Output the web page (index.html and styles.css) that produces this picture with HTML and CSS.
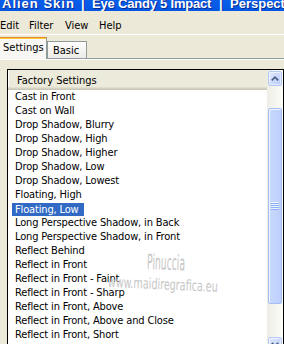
FILE: index.html
```html
<!DOCTYPE html>
<html>
<head>
<meta charset="utf-8">
<title>Eye Candy 5 Impact - Perspective Shadow</title>
<link rel="stylesheet" href="styles.css">
</head>
<body>
<div class="window">
  <div class="titlebar">
    <div class="title-text"><span class="t1">Alien Skin</span><span class="tsep">|</span><span class="t2">Eye Candy 5 Impact</span><span class="tsep">|</span><span class="t3">Perspective Shadow</span></div>
  </div>
  <div class="menubar">
    <span class="m m-edit">Edit</span><span class="m m-filter">Filter</span><span class="m m-view">View</span><span class="m">Help</span>
  </div>
  <div class="tabstrip">
    <div class="tab tab-settings">Settings</div>
    <div class="tab tab-basic">Basic</div>
  </div>
  <div class="panel">
    <div class="listbox">
      <div class="listmain">
        <div class="header">Factory Settings</div>
        <ul class="items">
          <li><span>Cast in Front</span></li>
          <li><span>Cast on Wall</span></li>
          <li><span>Drop Shadow, Blurry</span></li>
          <li><span>Drop Shadow, High</span></li>
          <li><span>Drop Shadow, Higher</span></li>
          <li><span>Drop Shadow, Low</span></li>
          <li><span>Drop Shadow, Lowest</span></li>
          <li><span>Floating, High</span></li>
          <li class="sel"><span>Floating, Low</span></li>
          <li><span>Long Perspective Shadow, in Back</span></li>
          <li><span>Long Perspective Shadow, in Front</span></li>
          <li><span>Reflect Behind</span></li>
          <li><span>Reflect in Front</span></li>
          <li><span>Reflect in Front - Faint</span></li>
          <li><span>Reflect in Front - Sharp</span></li>
          <li><span>Reflect in Front, Above</span></li>
          <li><span>Reflect in Front, Above and Close</span></li>
          <li><span>Reflect in Front, Short</span></li>
          <li><span>Reflect in Front, Small</span></li>
        </ul>
      </div>
      <div class="scrollbar">
        <div class="sb-btn"><svg width="8" height="5" viewBox="0 0 8 5"><polyline points="0.8,4.3 4,1.2 7.2,4.3" fill="none" stroke="#4d6185" stroke-width="1.8"/></svg></div>
        <div class="sb-gap1"></div>
        <div class="sb-thumb"><span class="grip"></span></div>
        <div class="sb-gap2"></div>
        <div class="sb-btn"><svg width="8" height="5" viewBox="0 0 8 5"><polyline points="0.8,0.8 4,3.9 7.2,0.8" fill="none" stroke="#4d6185" stroke-width="1.8"/></svg></div>
      </div>
    </div>
    <div class="wm wm-name">Pinuccia</div>
    <div class="wm wm-url">www.maidiregrafica.eu</div>
  </div>
</div>
</body>
</html>
```

FILE: styles.css
```css
* { box-sizing: border-box; margin: 0; padding: 0; }
html, body { width: 284px; height: 344px; overflow: hidden; }
body {
  background: #ece9d8;
  font-family: "DejaVu Sans Condensed", "DejaVu Sans", sans-serif;
  font-stretch: condensed;
  font-size: 11px;
  color: #000;
}
.window { display: flex; flex-direction: column; height: 344px; }

.titlebar {
  flex: none;
  height: 11px;
  overflow: hidden;
  background: linear-gradient(#0b5ee9, #0457e4);
  color: #fff;
}
.title-text {
  display: flex;
  margin-top: -4px;
  line-height: 15px;
  font-family: "Liberation Sans", Arial, sans-serif;
  font-stretch: normal;
  font-weight: bold;
  font-size: 13px;
  white-space: nowrap;
  text-shadow: 1px 1px #0c2a8c;
}
.t1 { flex: none; width: 81px; padding-left: 2px; letter-spacing: 1px; }
.tsep { flex: none; width: 11px; }
.t2 { flex: none; width: 127px; letter-spacing: -0.2px; }
.t3 { flex: none; }

.menubar {
  flex: none;
  display: flex;
  height: 24px;
  padding-top: 8px;
  line-height: 13px;
  border-bottom: 1px solid #fff;
}
.m { flex: none; }
.m-edit { width: 29px; }
.m-filter { width: 36px; }
.m-view { width: 34px; }

.tabstrip {
  flex: none;
  display: flex;
  align-items: flex-end;
  height: 23px;
}
.tab { flex: none; line-height: 13px; white-space: nowrap; }
.tab-settings {
  position: relative;
  z-index: 1;
  width: 47px;
  height: 22px;
  margin-bottom: -1px;
  padding: 3px 0 0 3px;
  border-top: 1px solid #e68b2c;
  border-right: 1px solid #919b9c;
  background: #f8f7f3;
  box-shadow: inset 0 1px #ffc73c;
}
.tab-basic {
  width: 40px;
  height: 17px;
  padding: 2px 0 0 5px;
  border: 1px solid #919b9c;
  border-bottom: 0;
  background: linear-gradient(#fefefe, #ecebe6);
}

.panel {
  position: relative;
  flex: 1;
  min-height: 0;
  overflow: hidden;
  border-top: 1px solid #919b9c;
  box-shadow: inset 0 1px #fff;
  padding: 10px 0 0 7px;
}
.listbox {
  display: flex;
  width: 277px;
  height: 300px;
  border: 1px solid #000;
  background: #fff;
}
.listmain { flex: none; width: 259px; }
.header {
  height: 20px;
  padding: 4px 0 0 9px;
  line-height: 13px;
  background: #ebeadb;
  box-shadow: inset 0 -1px #cbc7b8, inset 0 -2px #d6d2c2, inset 0 -3px #e2decd, inset 1px 0 #fff;
}
.items { list-style: none; }
.items li {
  height: 14px;
  line-height: 14px;
  padding-left: 4px;
  white-space: nowrap;
}
.items li span {
  display: inline-block;
  padding: 0 5px 0 3px;
  letter-spacing: -0.15px;
}
.items li.sel span {
  background: #316ac5;
  color: #fff;
  height: 13px;
  line-height: 13px;
  margin-top: 1px;
  vertical-align: top;
}

.scrollbar {
  flex: none;
  width: 16px;
  display: flex;
  flex-direction: column;
  padding: 1px 1px 0 1px;
  background: linear-gradient(to right, #eeede5, #fdfdfa);
}
.sb-btn {
  flex: none;
  height: 15px;
  display: flex;
  align-items: center;
  justify-content: center;
  border: 1px solid #b4c8f6;
  border-radius: 2px;
  background: linear-gradient(to bottom right, #e1eafe, #b8cbf8);
  box-shadow: inset 0 0 0 1px rgba(255, 255, 255, 0.5);
}
.sb-gap1 { flex: none; height: 22px; }
.sb-gap2 { flex: none; height: 33px; }
.sb-thumb {
  flex: none;
  height: 196px;
  display: flex;
  align-items: center;
  justify-content: center;
  border: 1px solid #a5bdf5;
  border-radius: 2px;
  background: linear-gradient(to right, #cad9fd, #bcd0fb);
  box-shadow: inset 1px 1px #f0f4ff;
}
.grip {
  width: 8px;
  height: 8px;
  background: repeating-linear-gradient(to bottom, #eef4fe 0 1px, #8cb0f8 1px 2px);
}

.wm {
  position: absolute;
  color: #c6c6c6;
  white-space: nowrap;
  transform-origin: 0 50%;
}
.wm-name {
  left: 147px;
  top: 193px;
  font-size: 21px;
  line-height: 21px;
  transform: rotate(2deg) scaleX(0.49);
}
.wm-url {
  left: 108px;
  top: 216px;
  font-size: 15px;
  line-height: 15px;
  transform: rotate(2.5deg) scaleX(0.71);
}
```
